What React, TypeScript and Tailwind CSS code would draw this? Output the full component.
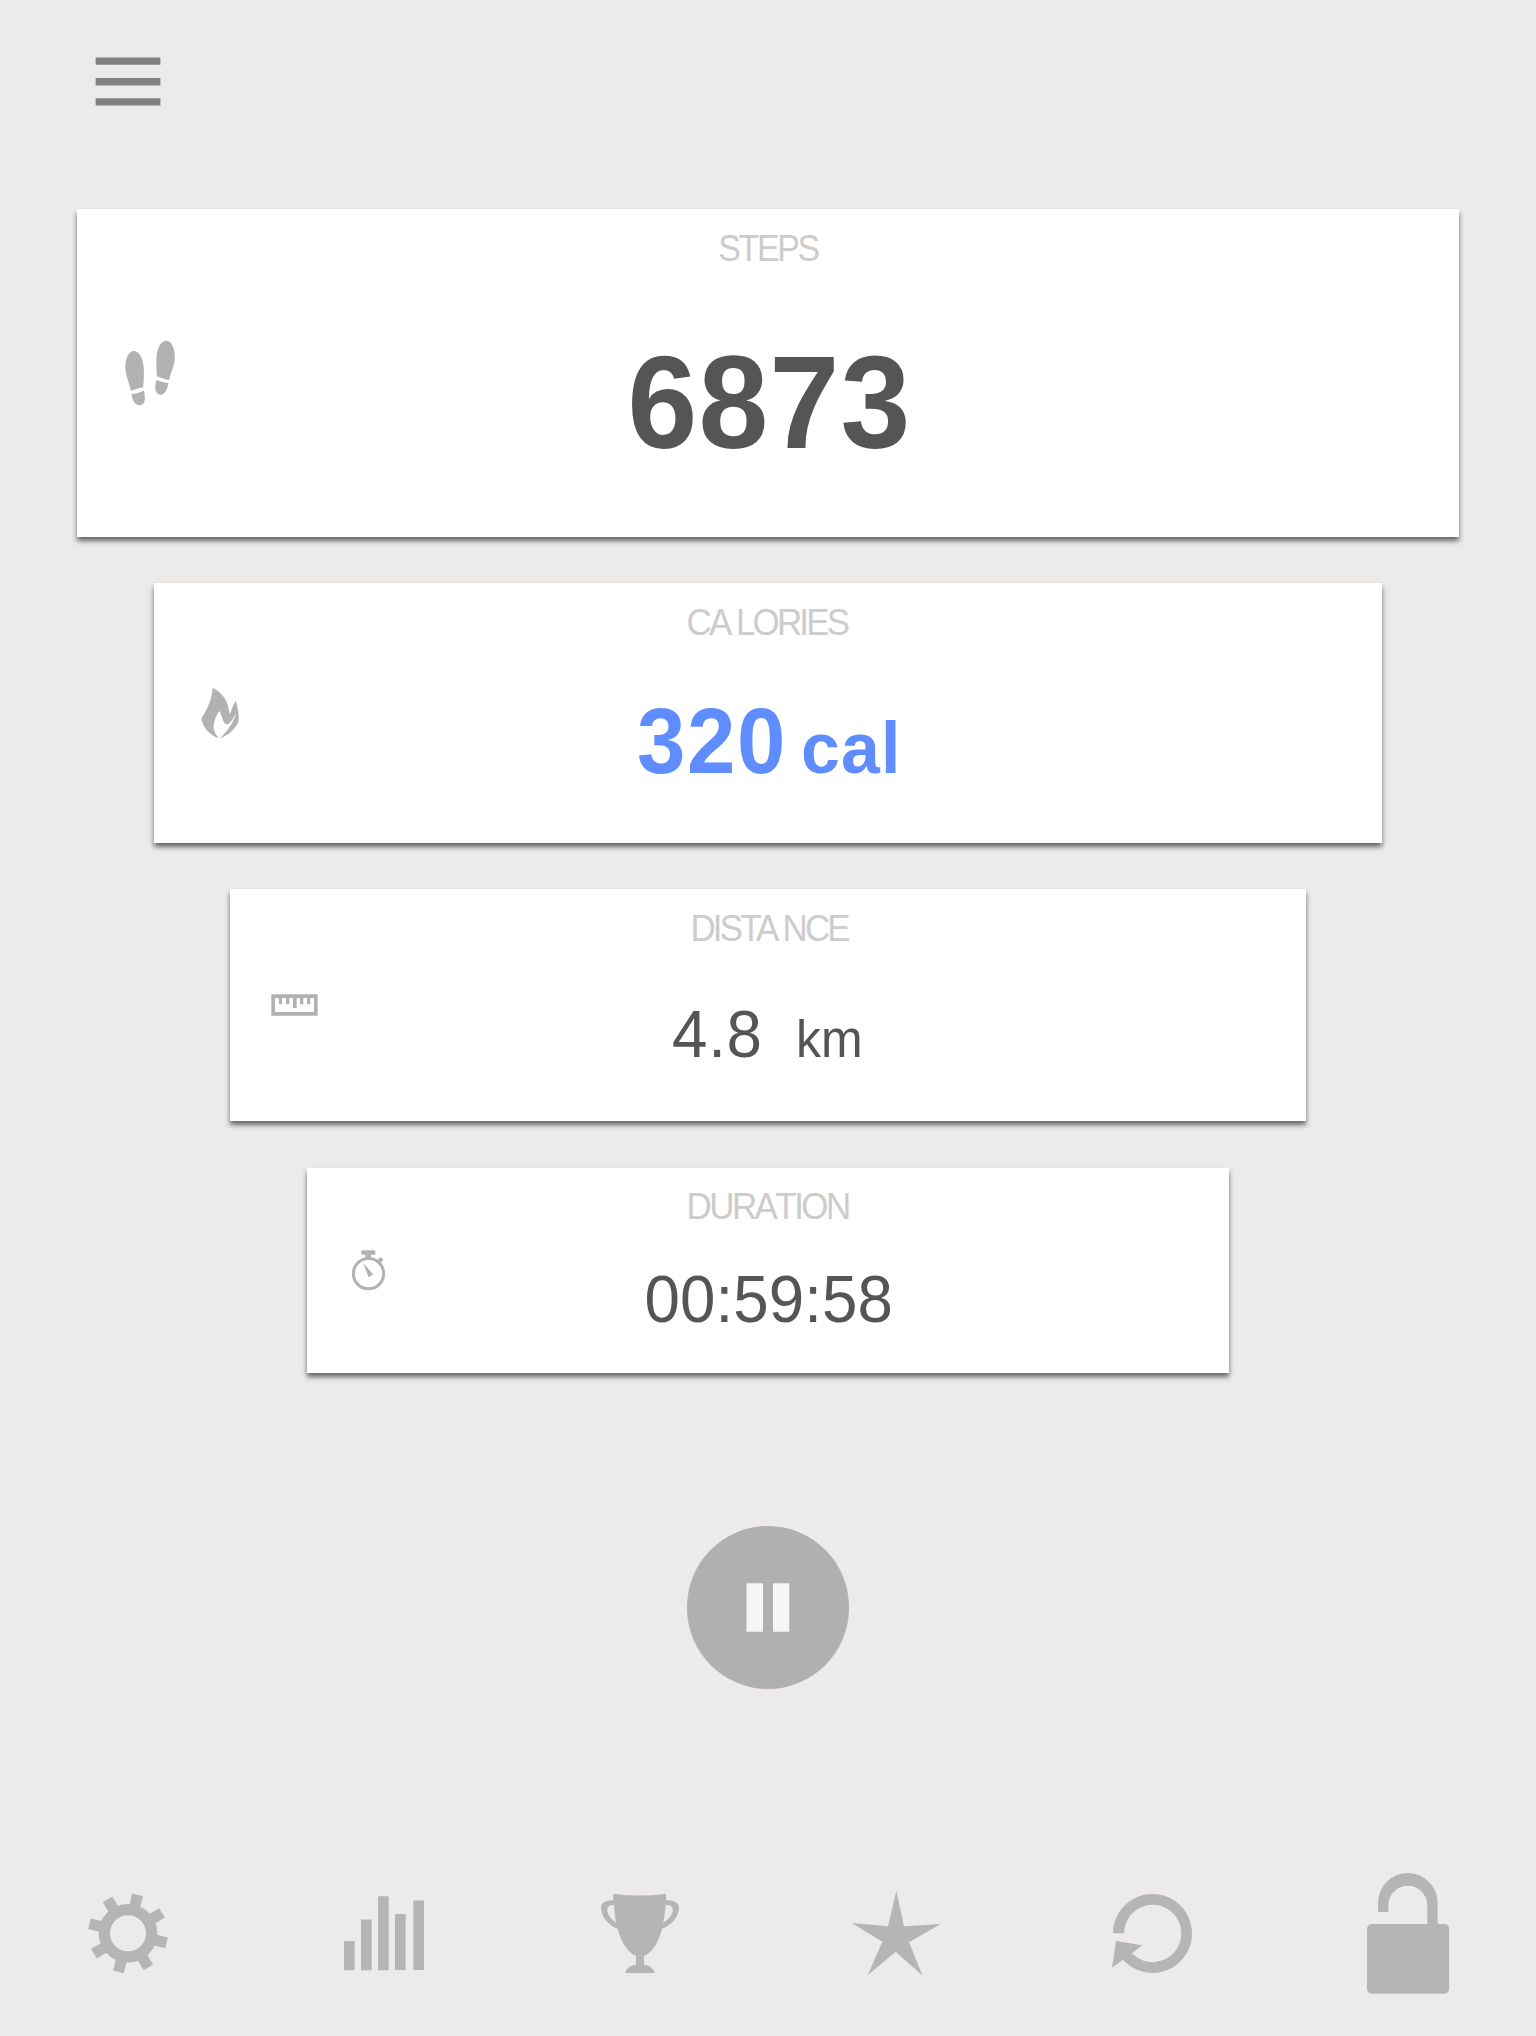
import type { ReactNode } from "react";

type IconProps = { box: string; className: string; children: ReactNode };

function Icon({ box, className, children }: IconProps) {
  return (
    <svg viewBox={box} className={className} fill="currentColor" aria-hidden="true">
      {children}
    </svg>
  );
}

const MenuIcon = () => (
  <Icon box="0 0 66 50" className="h-[50px] w-[66px]">
    <path d="M.65 .4H65.4V7.7H.65ZM.65 21H65.4V28.4H.65ZM.65 41.3H65.4V48.6H.65Z" />
  </Icon>
);

const FootprintsIcon = () => (
  <Icon box="195 450 150 198" className="h-[66px] w-[50px]">
    <path d="M222 483C240 484 251.500 512 251.500 540V562Q251 580 249 592Q230 596 213 602C207 575 196 558 196 530C196 505 206 483 222 483Z" />
    <path d="M214 613Q235 610 252 602C256 620 258 645 239 646C224 646 217 630 214 613Z" />
    <path d="M318 452C335 452 344.500 475 344.500 500C344.500 525 333 545 327 570Q308 567 291 559Q289 540 289 510C289 480 301 452 318 452Z" />
    <path d="M289 570Q305 577 325 579C322 600 314 614 302 614C283 614 284 590 289 570Z" />
  </Icon>
);

const FlameIcon = () => (
  <Icon box="183 351 117 156" className="h-[52px] w-[39px]">
    <path d="M218 353C250 370 266 395 268 432C275 425 278 405 287 393C293 410 297 430 296 452C290 475 265 495 241 505C258 485 282 460 288 428C280 445 270 463 260 463C250 462 246 440 239 423C228 435 221 455 221 475Q224 492 236 505C210 495 190 475 184 446C196 425 214 400 218 353Z" />
  </Icon>
);

const RulerIcon = () => (
  <Icon box="153 342 141 66" className="h-[22px] w-[47px]">
    <path
      fillRule="evenodd"
      d="M154 343H293V407H154ZM165 354V396H282V354H271V373H261V354H250V373H240V354H230V384H219V354H208V373H198V354H186V373H177V354Z"
    />
  </Icon>
);

const StopwatchIcon = () => (
  <Icon box="183 300 105 123" className="h-[41px] w-[35px]">
    <circle cx="235.500" cy="371" r="45.500" fill="none" stroke="currentColor" strokeWidth="9" />
    <rect x="213.500" y="301" width="42.500" height="13.500" rx="4" />
    <path d="M226 313H243V326H226ZM271 320L280 329L270 341L261 333ZM219 338L249 373L236 382Z" />
  </Icon>
);

const gearTeeth = [14, 59, 104, 149, 194, 239, 284, 329];

const GearIcon = () => (
  <Icon box="84 99 240 243" className="h-[81px] w-[80px]">
    <circle cx="204" cy="220" r="71" fill="none" stroke="currentColor" strokeWidth="34" />
    {gearTeeth.map((angle) => (
      <rect key={angle} x="187.500" y="101" width="33" height="36" transform={`rotate(${angle} 204 220)`} />
    ))}
  </Icon>
);

const ChartIcon = () => (
  <Icon box="852 99 240 243" className="h-[81px] w-[80px]">
    <path d="M852 243H884V331H852ZM903 178.500H935V331H903ZM954 109H986V331H954ZM1005 162H1037V330H1005ZM1060 121.500H1092V330H1060Z" />
  </Icon>
);

const TrophyIcon = () => (
  <Icon box="60 99 240 243" className="h-[81px] w-[80px]">
    <path
      fillRule="evenodd"
      d="M100 101Q180 112 258 101V121C282 121 297 128 297 143C297 168 275 196 246 206C238 240 220 277 192 288V314C210 316 222 326 224 339H136C138 326 150 316 168 314V288C140 277 122 240 113 206C85 196 63 168 63 143C63 128 78 121 100 121ZM102 135C90 135 82 139 82 150C82 163 93 178 108 188Q103 160 102 135ZM257 135C270 135 278 139 278 150C278 163 265 180 250 188Q255 160 257 135Z"
    />
  </Icon>
);

const StarIcon = () => (
  <Icon box="813 90 270 261" className="h-[87px] w-[90px]">
    <path d="M949 93L972 199L1082 192L987 247L1028 347L947 275L863 346L907 245L815 189L924 199Z" />
  </Icon>
);

const RestartIcon = () => (
  <Icon box="66 129 240 243" className="h-[81px] w-[80px]">
    <path d="M69 250A118.500 118.500 0 1 1 99 329L66 353L78 273L157 286L126 310A86 86 0 1 0 102 250Z" />
  </Icon>
);

const UnlockIcon = () => (
  <Icon box="828 66 252 369" className="h-[123px] w-[84px]">
    <rect x="831" y="222" width="246.500" height="209.500" rx="15" />
    <path d="M864 186V158.500A89.500 89.500 0 0 1 1043 158.500V226H1012V165.500A58.500 58.500 0 0 0 895 165.500V186Z" />
  </Icon>
);

type CardProps = {
  title: ReactNode;
  titleClass: string;
  icon: ReactNode;
  iconClass: string;
  className: string;
  children: ReactNode;
};

function Card({ title, titleClass, icon, iconClass, className, children }: CardProps) {
  return (
    <section
      className={`grid grid-cols-[160px_1fr_160px] bg-white shadow-[0_4px_5px_rgba(0,0,0,0.57)] ${className}`}
    >
      <div className={`flex items-center text-[#b2b2b2] ${iconClass}`}>{icon}</div>
      <div className="flex flex-col items-center whitespace-nowrap">
        <h2 className={`text-[36px] leading-[36px] text-[#cccccc] ${titleClass}`}>{title}</h2>
        {children}
      </div>
    </section>
  );
}

export default function App() {
  return (
    <div className="flex h-[2036px] w-[1536px] flex-col items-center overflow-hidden bg-[#ecebe9] font-['Liberation_Sans',Arial,sans-serif] text-[#555555]">
      <header className="flex h-[209px] w-full shrink-0 items-start pt-[57px] pl-[95px]">
        <button aria-label="Menu" className="text-[#808080]">
          <MenuIcon />
        </button>
      </header>

      <main className="flex flex-col items-center">
        <Card
          title="STEPS"
          titleClass="mt-[22px] scale-x-94 tracking-[-2.4px]"
          icon={<FootprintsIcon />}
          iconClass="pl-[48px]"
          className="h-[328px] w-[1382px]"
        >
          <p className="mt-[70px] scale-x-95 pl-[3px] text-[132px] leading-[132px] font-bold tracking-[1.4px]">6873</p>
        </Card>
        <Card
          title={
            <>
              CA<span className="ml-[6.8px]">LORIES</span>
            </>
          }
          titleClass="mt-[22px] scale-x-97 pr-[2px] tracking-[-2.9px]"
          icon={<FlameIcon />}
          iconClass="pl-[47px]"
          className="mt-[46px] h-[260px] w-[1228px]"
        >
          <p className="mt-[54px] flex items-baseline pl-[6px] leading-[92px] font-bold text-[#5f8cff]">
            <span className="origin-left scale-x-[.945] text-[92px] tracking-[1.7px]">320</span>
            <span className="ml-[5.6px] origin-left scale-x-[.97] text-[72px] tracking-[1.2px]">cal</span>
          </p>
        </Card>
        <Card
          title={
            <>
              DISTA<span className="ml-[6.1px]">NCE</span>
            </>
          }
          titleClass="mt-[22px] scale-x-97 pl-[2px] tracking-[-2.9px]"
          icon={<RulerIcon />}
          iconClass="pl-[41px]"
          className="mt-[46px] h-[232px] w-[1076px]"
        >
          <p className="mt-[53px] flex items-baseline leading-[67px]">
            <span className="origin-left scale-x-[.95] text-[67px] tracking-[.8px]">4.8</span>
            <span className="ml-[28.1px] origin-left scale-x-[.98] text-[51px]">km</span>
          </p>
        </Card>
        <Card
          title="DURATION"
          titleClass="mt-[21px] scale-x-97 tracking-[-2.6px] [font-kerning:none]"
          icon={<StopwatchIcon />}
          iconClass="pl-[44px]"
          className="mt-[47px] h-[205px] w-[922px]"
        >
          <p className="mt-[40px] scale-x-95 pl-px text-[67px] leading-[67px] tracking-[.1px]">00:59:58</p>
        </Card>
      </main>

      <button
        aria-label="Pause"
        className="mt-[153px] flex h-[163px] w-[162px] shrink-0 items-center justify-center rounded-full bg-[#b0b0ae] text-[#f6f5f3]"
      >
        <Icon box="0 0 44 49" className="h-[49px] w-[44px]">
          <path d="M.5 .2H17V48.700H.5ZM27 .2H43.300V48.700H27Z" />
        </Icon>
      </button>

      <nav className="mt-[183px] grid h-[123px] w-full grid-cols-6 place-items-center text-[#b5b5b3]">
        <GearIcon />
        <ChartIcon />
        <TrophyIcon />
        <StarIcon />
        <RestartIcon />
        <UnlockIcon />
      </nav>
    </div>
  );
}
